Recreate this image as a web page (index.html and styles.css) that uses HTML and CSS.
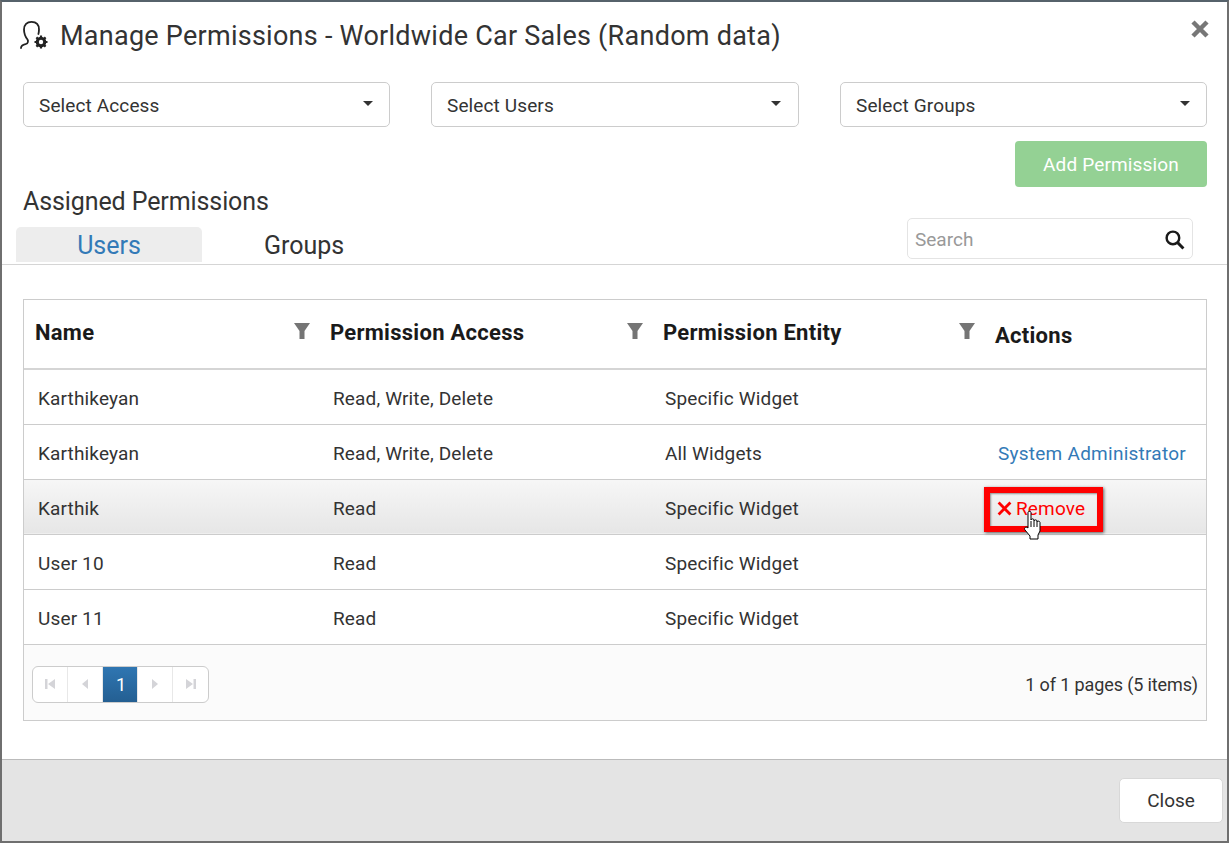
FILE: index.html

```html
<!DOCTYPE html>
<html lang="en">
<head>
  <meta charset="UTF-8">
  <meta name="viewport" content="width=device-width, initial-scale=1">
  <title>Manage Permissions</title>
  <link rel="stylesheet" href="styles.css">
</head>
<body>

  <div class="modal">
    <div class="modal-head">
      <svg class="title-icon" width="30" height="30" viewBox="0 0 30 30">
        <path d="M2 28C2 25 5 24.500 7 24C9 23.500 9.500 21 8.500 19.500C6.500 17 5 13.500 5 9.500C5 4.500 8 1.800 12.500 1.800C17 1.800 20 4.500 20 9.500C20 11 19.800 12.500 19.400 14" fill="none" stroke="#222" stroke-width="1.800" stroke-linecap="round"/>
        <circle cx="22" cy="22" r="4" fill="none" stroke="#222" stroke-width="2.600"/>
        <path d="M22 15.500v13M15.500 22h13M17.400 17.400l9.200 9.200M26.600 17.400l-9.200 9.200" stroke="#222" stroke-width="2.200"/>
        <circle cx="22" cy="22" r="2.200" fill="#fff"/>
      </svg>
      <h1>Manage Permissions - Worldwide Car Sales (Random data)</h1>
      <svg class="close-x" width="20" height="20" viewBox="0 0 20 20">
        <path d="M3 3l14 14M17 3L3 17" stroke="#777" stroke-width="4.500"/>
      </svg>
    </div>

    <div class="pickers">
      <div class="picker">Select Access<span class="caret"></span></div>
      <div class="picker">Select Users<span class="caret"></span></div>
      <div class="picker">Select Groups<span class="caret"></span></div>
    </div>

    <div class="add-row">
      <button class="btn-add">Add Permission</button>
    </div>

    <h2>Assigned Permissions</h2>

    <div class="tabs">
      <div class="tab active">Users</div>
      <div class="tab tab-second">Groups</div>
      <div class="search">
        <span>Search</span>
        <svg width="21" height="21" viewBox="0 0 20 20">
          <circle cx="8.500" cy="8.500" r="6" fill="none" stroke="#1a1a1a" stroke-width="2.300"/>
          <path d="M13 13l5.500 5.500" stroke="#1a1a1a" stroke-width="2.800"/>
        </svg>
      </div>
    </div>

    <div class="grid-wrap">
      <table class="grid">
        <thead>
          <tr>
            <th>Name
              <svg class="filter" width="16" height="16" viewBox="0 0 16 16"><path d="M0 0h16L10.500 8v8h-5V8z" fill="#757575"/></svg>
            </th>
            <th>Permission Access
              <svg class="filter" width="16" height="16" viewBox="0 0 16 16"><path d="M0 0h16L10.500 8v8h-5V8z" fill="#757575"/></svg>
            </th>
            <th>Permission Entity
              <svg class="filter" width="16" height="16" viewBox="0 0 16 16"><path d="M0 0h16L10.500 8v8h-5V8z" fill="#757575"/></svg>
            </th>
            <th class="th-actions">Actions</th>
          </tr>
        </thead>
        <tbody>
          <tr>
            <td>Karthikeyan</td><td>Read, Write, Delete</td><td>Specific Widget</td><td></td>
          </tr>
          <tr>
            <td>Karthikeyan</td><td>Read, Write, Delete</td><td>All Widgets</td><td class="admin">System Administrator</td>
          </tr>
          <tr class="hover">
            <td>Karthik</td><td>Read</td><td>Specific Widget</td>
            <td class="action-cell">
              <div class="remove">
                <svg width="15" height="15" viewBox="0 0 14 14"><path d="M1.500 1.500l11 11M12.500 1.500l-11 11" stroke="#f00" stroke-width="2.600"/></svg>
                Remove
              </div>
              <svg class="hand" width="24" height="34" viewBox="0 0 24 32">
                <path d="M6 19V3.500C6 2 9 2 9 3.500V11c0-1.500 3-1.500 3 0v1c0-1.500 3-1.500 3 0v1c0-1.500 3-1 3 .5V22l-2 4v4H8v-3l-5-6c-1.500-2 1-4 3-2z" fill="#fff" stroke="#000" stroke-width="1"/>
                <path d="M9 12v6M12 12v6M15 13v5" stroke="#000" stroke-width="1"/>
              </svg>
            </td>
          </tr>
          <tr>
            <td>User 10</td><td>Read</td><td>Specific Widget</td><td></td>
          </tr>
          <tr>
            <td>User 11</td><td>Read</td><td>Specific Widget</td><td></td>
          </tr>
        </tbody>
      </table>
      <div class="pager-bar">
        <div class="pager">
          <span class="pg">
            <svg width="12" height="12" viewBox="0 0 12 12"><path d="M1 1h2.500v10H1zM11 1v10L4 6z" fill="#d4d4d8"/></svg>
          </span>
          <span class="pg">
            <svg width="12" height="12" viewBox="0 0 12 12"><path d="M9 1v10L3 6z" fill="#d4d4d8"/></svg>
          </span>
          <span class="pg current">1</span>
          <span class="pg">
            <svg width="12" height="12" viewBox="0 0 12 12"><path d="M3 1v10l6-5z" fill="#d4d4d8"/></svg>
          </span>
          <span class="pg">
            <svg width="12" height="12" viewBox="0 0 12 12"><path d="M11 1H8.500v10H11zM1 1v10l7-5z" fill="#d4d4d8"/></svg>
          </span>
        </div>
        <div class="pager-info">1 of 1 pages (5 items)</div>
      </div>
    </div>

    <div class="modal-foot">
      <button class="btn-close">Close</button>
    </div>
  </div>

</body>
</html>
```

FILE: styles.css

```css
html, body {
  margin: 0;
  padding: 0;
  background: #fff;
}
body {
  font-family: Roboto, 'Liberation Sans', sans-serif;
  color: #333;
  width: 1231px;
  height: 843px;
  overflow: hidden;
}
.modal {
  box-sizing: border-box;
  width: 1229px;
  height: 843px;
  border: 2px solid #6f6f6f;
  border-top-color: #56626b;
  display: flex;
  flex-direction: column;
  background: #fff;
}
.modal-head {
  display: flex;
  align-items: center;
  height: 66px;
  padding: 2px 17px 0 17px;
  box-sizing: border-box;
}
.title-icon {
  margin-right: 11px;
  margin-top: -2px;
}
h1 {
  flex: 1;
  margin: 0;
  font-size: 27px;
  letter-spacing: .26px;
  font-weight: 400;
  color: #333;
}
.close-x {
  margin-top: -14px;
}
.pickers {
  display: flex;
  justify-content: space-between;
  margin: 14px 20px 0 21px;
}
.picker {
  box-sizing: border-box;
  width: 367px;
  height: 45px;
  border: 1px solid #ccc;
  border-radius: 5px;
  padding: 1px 15px 0;
  display: flex;
  align-items: center;
  justify-content: space-between;
  font-size: 19px;
  letter-spacing: .12px;
}
.picker:nth-child(2) {
  width: 368px;
}
.picker:nth-child(2) .caret {
  margin-right: 2px;
}
.caret {
  width: 0;
  height: 0;
  border-left: 5px solid transparent;
  border-right: 5px solid transparent;
  border-top: 5px solid #333;
  margin: -3px 1px 0 0;
}
.add-row {
  display: flex;
  justify-content: flex-end;
  margin: 14px 20px 0 21px;
}
.btn-add {
  width: 192px;
  height: 46px;
  border: none;
  border-radius: 4px;
  background: #94d194;
  color: #fff;
  font-family: inherit;
  font-size: 19px;
  letter-spacing: .15px;
}
h2 {
  margin: 0 0 0 21px;
  height: 40px;
  line-height: 30px;
  font-size: 25px;
  letter-spacing: -.1px;
  font-weight: 400;
  color: #333;
}
.tabs {
  display: flex;
  align-items: flex-end;
  height: 37px;
  padding-left: 14px;
  border-bottom: 1px solid #d5d5d5;
  position: relative;
}
.tab {
  width: 186px;
  height: 35px;
  line-height: 37px;
  text-align: center;
  font-size: 25px;
  border-radius: 5px 5px 0 0;
  margin-bottom: 2px;
}
.tab-second {
  margin-left: 9px;
}
.tab.active {
  background: #ededed;
  color: #337ab7;
}
.search {
  position: absolute;
  right: 34px;
  bottom: 5px;
  box-sizing: border-box;
  width: 286px;
  height: 41px;
  border: 1px solid #e4e4e4;
  border-radius: 5px;
  display: flex;
  align-items: center;
  justify-content: space-between;
  padding: 1px 7px 0 7px;
  font-size: 19px;
  color: #999;
  background: #fff;
}
.grid-wrap {
  margin: 34px 20px 0 21px;
  border: 1px solid #ccc;
}
.grid {
  width: 100%;
  border-collapse: collapse;
  table-layout: fixed;
}
.grid th, .grid td {
  box-sizing: border-box;
}
.grid th {
  position: relative;
  height: 69px;
  padding: 0 0 3px 11px;
  text-align: left;
  font-size: 22px;
  letter-spacing: .27px;
  font-weight: 700;
  color: #1a1a1a;
  border-bottom: 2px solid #d5d5d5;
}
.grid th:nth-child(1) { width: 295px; }
.grid th:nth-child(2) { width: 333px; }
.grid th:nth-child(3) { width: 332px; }
.grid th.th-actions {
  padding: 3px 0 0 11px;
}
.filter {
  position: absolute;
  right: 9px;
  top: 23px;
}
.grid td {
  height: 55px;
  padding: 4px 0 0 14px;
  font-size: 19px;
  letter-spacing: .15px;
  border-bottom: 1px solid #ccc;
  color: #333;
}
.grid td:nth-child(3) {
  padding-left: 13px;
}
.grid .hover td {
  background: linear-gradient(#f6f6f6, #e6e6e6);
}
.grid td.admin {
  color: #337ab7;
  letter-spacing: .25px;
}
.action-cell {
  position: relative;
}
.remove {
  position: absolute;
  left: 0;
  top: 7px;
  box-sizing: border-box;
  width: 119px;
  height: 45px;
  border: 6px solid #f00;
  box-shadow: 1px 1px 3px rgba(0, 0, 0, .6), inset 1px 1px 2px rgba(0, 0, 0, .4);
  display: flex;
  align-items: center;
  gap: 4px;
  padding: 0 0 2px 7px;
  color: #f00;
}
.hand {
  position: absolute;
  left: 38px;
  top: 28px;
}
.pager-bar {
  display: flex;
  align-items: center;
  justify-content: space-between;
  box-sizing: border-box;
  height: 75px;
  padding: 4px 8px 0;
  background: #fbfbfb;
  font-size: 18px;
  letter-spacing: -.12px;
}
.pager {
  display: flex;
  height: 37px;
  box-sizing: border-box;
  border: 1px solid #ccc;
  border-radius: 6px;
  overflow: hidden;
  background: #fff;
}
.pg {
  box-sizing: border-box;
  width: 35px;
  display: flex;
  align-items: center;
  justify-content: center;
  border-right: 1px solid #e8e8e8;
}
.pg:last-child {
  border-right: none;
}
.pg.current {
  background: linear-gradient(#2f76b2, #245f92);
  color: #fff;
  font-size: 18px;
  padding-left: 2px;
}
.modal-foot {
  flex: 1;
  margin-top: 38px;
  background: #e4e4e4;
  border-top: 1px solid #bbb;
  display: flex;
  justify-content: flex-end;
  align-items: flex-start;
  padding: 18px 4px 0 0;
}
.btn-close {
  width: 104px;
  height: 45px;
  padding-top: 2px;
  border: 1px solid #d8d8d8;
  border-radius: 5px;
  background: #fff;
  color: #333;
  font-family: inherit;
  font-size: 19px;
}
```
